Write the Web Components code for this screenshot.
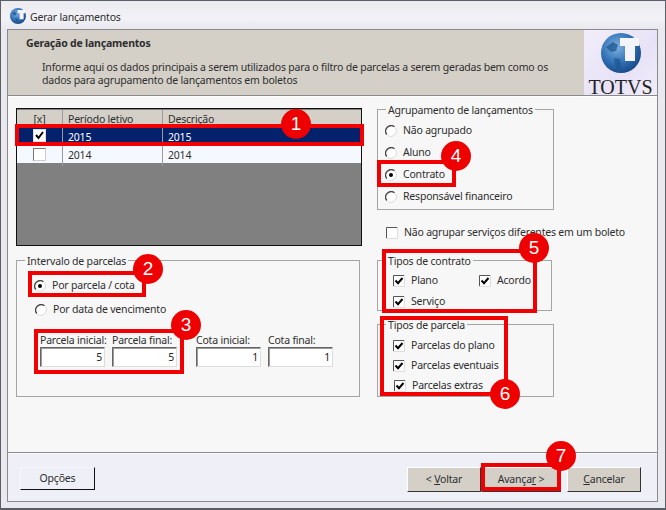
<!DOCTYPE html>
<html lang="pt"><head><meta charset="utf-8"><title>Gerar lançamentos</title>
<style>
html,body{margin:0;padding:0;width:666px;height:510px;overflow:hidden}
body{font:10.5px/13px "Noto Sans",sans-serif;letter-spacing:-.2px;color:#2e2e2e}
</style></head><body>
<gl-dialog>
  <gl-header slot="header"></gl-header>
  <div slot="left" style="display:flex;flex-direction:column;gap:14px">
    <gl-grid></gl-grid>
    <gl-group label="Intervalo de parcelas" style="width:344px;height:137px">
      <div style="display:flex;flex-direction:column;gap:11px;padding:11px 0 0 18px">
        <gl-opt type="radio" checked style="margin-left:-1px">Por parcela / cota</gl-opt>
        <gl-opt type="radio">Por data de vencimento</gl-opt>
      </div>
      <div style="display:flex;gap:0;padding:18px 0 0 23px">
        <gl-num label="Parcela inicial:" value="5" style="width:65px;margin-right:7px"></gl-num>
        <gl-num label="Parcela final:" value="5" style="width:65px;margin-right:19px"></gl-num>
        <gl-num label="Cota inicial:" value="1" style="width:65px;margin-right:7px"></gl-num>
        <gl-num label="Cota final:" value="1" style="width:65px"></gl-num>
      </div>
    </gl-group>
  </div>
  <div slot="right" style="display:flex;flex-direction:column">
    <gl-group label="Agrupamento de lançamentos" style="width:177px;height:101px;margin-top:1px">
      <div style="display:flex;flex-direction:column;gap:9px;padding:7px 0 0 7px">
        <gl-opt type="radio">Não agrupado</gl-opt>
        <gl-opt type="radio">Aluno</gl-opt>
        <gl-opt type="radio" checked>Contrato</gl-opt>
        <gl-opt type="radio">Responsável financeiro</gl-opt>
      </div>
    </gl-group>
    <gl-opt type="check" style="margin:16px 0 0 9px">Não agrupar serviços diferentes em um boleto</gl-opt>
    <gl-group label="Tipos de contrato" style="width:175px;height:51px;margin-top:21px">
      <div style="display:grid;grid-template-columns:86px auto;row-gap:8px;padding:6px 0 0 15px">
        <gl-opt type="check">Plano</gl-opt>
        <gl-opt type="check">Acordo</gl-opt>
        <gl-opt type="check">Serviço</gl-opt>
      </div>
    </gl-group>
    <gl-group label="Tipos de parcela" style="width:177px;height:73px;margin-top:13px">
      <div style="display:flex;flex-direction:column;gap:7px;padding:7px 0 0 15px">
        <gl-opt type="check">Parcelas do plano</gl-opt>
        <gl-opt type="check">Parcelas eventuais</gl-opt>
        <gl-opt type="check" style="margin-left:1px">Parcelas extras</gl-opt>
      </div>
    </gl-group>
  </div>
  <gl-btn slot="foot-left" flat style="width:75px;height:23px">Opções</gl-btn>
  <gl-btn slot="foot-right" style="width:74px"><span>&lt; <u>V</u>oltar</span></gl-btn>
  <gl-btn slot="foot-right" style="width:80px;margin-right:6px"><span>Avança<u>r</u> &gt;</span></gl-btn>
  <gl-btn slot="foot-right" style="width:74px"><span><u>C</u>ancelar</span></gl-btn>
  <gl-mark slot="marks" n="1" x="15" y="124" w="349" h="22" cx="296" cy="124"></gl-mark>
  <gl-mark slot="marks" n="2" x="28" y="271" w="118" h="26" cx="148" cy="269"></gl-mark>
  <gl-mark slot="marks" n="3" x="34" y="329" w="150" h="45" cx="186" cy="325"></gl-mark>
  <gl-mark slot="marks" n="4" x="377" y="160" w="79" h="27" cx="456" cy="156"></gl-mark>
  <gl-mark slot="marks" n="5" x="382" y="249" w="155" h="64" cx="534" cy="248"></gl-mark>
  <gl-mark slot="marks" n="6" x="380" y="316" w="128" h="80" cx="505" cy="394"></gl-mark>
  <gl-mark slot="marks" n="7" x="481" y="463" w="80" h="28" cx="561" cy="456"></gl-mark>
</gl-dialog>
<script>
function def(name, html, init){
  customElements.define(name, class extends HTMLElement{
    constructor(){super();this.attachShadow({mode:'open'}).innerHTML=html;}
    connectedCallback(){ if(init) init.call(this,this.shadowRoot); }
  });
}
const globe=(id,s)=>`<svg width="${s}" height="${s}" viewBox="0 0 40 40" aria-hidden="true"><defs><radialGradient id="${id}" cx=".4" cy=".35" r=".75"><stop offset="0" stop-color="#7fb2e0"/><stop offset=".55" stop-color="#2f6fb4"/><stop offset="1" stop-color="#123f7c"/></radialGradient></defs><circle cx="20" cy="20" r="20" fill="url(#${id})"/><path d="M5 14l7-5 5 3-2 6-5 1zM13 25l6 1 1 8-4 3-2-6z" fill="#1f568f" opacity=".75"/><path d="M19 5h19v8h-4v15H24V13h-5z" fill="#f4f4fa"/></svg>`;

def('gl-dialog',`<style>
:host{display:block;position:relative;width:666px;height:510px;box-sizing:border-box;border:1px solid #5c5f66;border-bottom-width:2px;background:#e9e9ef;overflow:hidden}
.title{display:flex;align-items:center;gap:4px;box-sizing:border-box;height:28px;padding:2px 0 0 9px;background:linear-gradient(#ebebf1,#f1f1f6 60%,#e9e9ef)}
.title span{margin-top:2px}
.panel{box-sizing:border-box;width:651px;height:473px;margin-left:6px;border:1px solid #8a8a8e;display:flex;flex-direction:column}
.body{flex:0 0 357px;box-sizing:border-box;background:#f7f7f7;border-bottom:1px solid #8a8a8e;display:grid;grid-template-columns:346px 177px;column-gap:15px;padding:12px 0 0 8px;box-shadow:inset 0 1px #fff}
.foot{flex:1;background:#eeeff7;border-top:1px solid #fff;display:flex;justify-content:space-between;padding:13px 16px 0 12px}
.r{display:flex;align-items:flex-start}
</style>
<div class="title">${globe('g1',16)}<span>Gerar lançamentos</span></div>
<div class="panel"><slot name="header"></slot>
<div class="body"><slot name="left"></slot><slot name="right"></slot></div>
<div class="foot"><slot name="foot-left"></slot><div class="r"><slot name="foot-right"></slot></div></div></div>
<slot name="marks"></slot>`);

def('gl-header',`<style>
:host{display:flex;justify-content:space-between;height:65px;background:#d4d0c8;border-bottom:1px solid #8a8a8e}
.t{padding:7px 0 0 18px}
b{display:block;line-height:13px;font-weight:700}
p{margin:11px 0 0 16px;line-height:13px;width:520px}
.logo{width:73px;background:linear-gradient(135deg,#f2eefb,#e7e2f6 60%,#f1edfb);display:flex;flex-direction:column;align-items:center;padding-top:3px;box-sizing:border-box}
.logo svg{margin-left:1px;flex:none}
.logo span{font:20px/15px "Liberation Serif",serif;letter-spacing:0;color:#222;white-space:nowrap;margin-top:7px}
</style>
<div class="t"><b>Geração de lançamentos</b><p>Informe aqui os dados principais a serem utilizados para o filtro de parcelas a serem geradas bem como os dados para agrupamento de lançamentos em boletos</p></div>
<div class="logo">${globe('g2',40)}<span>TOTVS</span></div>`);

def('gl-grid',`<style>
:host{display:block;box-sizing:border-box;width:346px;height:138px;border:1px solid #111;background:#808080;padding-top:1px}
.row{display:grid;grid-template-columns:45px 100px 1fr;box-sizing:border-box}
.row>*{box-sizing:border-box;padding-left:5px;border-left:1px solid #9a9a9a;white-space:nowrap}
.row>:first-child{border:0;padding:0;display:flex;justify-content:center}
.h{height:16px;background:#d4d0c8;line-height:19px}
.s{height:19px;background:#04216b;color:#fff;line-height:22px}
.n{height:18px;background:#f5f9ff;line-height:21px}
.box{width:13px;height:13px;box-sizing:border-box;background:#fff;border:1px solid #8c8c8c;margin-top:3px;display:block}
.s .box{border-color:#ddd}
svg{display:block}
</style>
<div class="row h"><div>[x]</div><div>Período letivo</div><div>Descrição</div></div>
<div class="row s"><div><span class="box"><svg width="11" height="11" viewBox="0 0 11 11"><path d="M2 5l2.500 3L9 2" fill="none" stroke="#000" stroke-width="2"/></svg></span></div><div>2015</div><div>2015</div></div>
<div class="row n"><div><span class="box" style="border-color:#777 #ccc #ccc #777"></span></div><div>2014</div><div>2014</div></div>`);

def('gl-group',`<style>
:host{display:block;box-sizing:border-box;border:1px solid #a4a4a4}
.l{display:table;margin:-6px 0 0 8px;padding:0 2px;background:#f7f7f7;line-height:13px;white-space:nowrap}
</style><div class="l"></div><slot></slot>`,function(s){s.querySelector('.l').textContent=this.getAttribute('label')});

def('gl-opt',`<style>
:host{display:flex;align-items:center;gap:6px;height:13px;line-height:13px;white-space:nowrap}
svg{flex:none;display:block}
</style><span id="i"></span><slot></slot>`,function(s){
  const t=this.getAttribute('type'),c=this.hasAttribute('checked');
  const k=s.getElementById('i');k.style.cssText='display:block;width:12px;height:12px;flex:none';
  k.innerHTML=t==='radio'
   ?`<svg width="12" height="12" viewBox="0 0 12 12"><circle cx="6" cy="6" r="5.500" fill="#fff"/><path d="M1.800 9.500A5.500 5.500 0 0 1 9.500 1.800" fill="none" stroke="#444" stroke-width="1.300"/><path d="M2.500 10.200A5.500 5.500 0 0 0 10.200 2.500" fill="none" stroke="#d8d8d8"/>${c?'<circle cx="6" cy="6" r="2" fill="#000"/>':''}</svg>`
   :`<svg width="12" height="12" viewBox="0 0 12 12"><rect width="12" height="12" fill="#fff"/><path d="M.5 12V.5H12" fill="none" stroke="#555"/><path d="M11.500 0v11.500H0" fill="none" stroke="#ddd"/>${this.textContent.startsWith('Não')?'':'<path d="M2.500 5.500l2.500 2.700L9.500 3" fill="none" stroke="#000" stroke-width="2"/>'}</svg>`;
});

def('gl-num',`<style>
:host{display:flex;flex-direction:column;gap:0}
label{line-height:13px;white-space:nowrap}
output{box-sizing:border-box;display:block;height:20px;background:#fff;border:1px solid;border-color:#666 #ddd #ddd #666;box-shadow:inset 1px 1px #999;text-align:right;line-height:18px;padding-right:2px;color:#222}
</style><label></label><output></output>`,function(s){s.querySelector('label').textContent=this.getAttribute('label');s.querySelector('output').textContent=this.getAttribute('value')});

def('gl-btn',`<style>
:host{display:flex;align-items:center;justify-content:center;box-sizing:border-box;height:25px;background:#d4d0c8;border:1px solid;border-color:#fff #333 #333 #fff;white-space:nowrap}
:host([flat]){background:#eeeff7;border-color:#f6f6fb #111 #111 #f6f6fb}
</style><slot></slot>`);

def('gl-mark',`<style>
:host{display:contents}
.r{position:absolute;box-sizing:border-box;border:4px solid #f00000}
.c{position:absolute;box-sizing:border-box;width:30px;height:30px;margin:-15px 0 0 -15px;border-radius:50%;background:#ef0000;color:#fff;font:19px/30px "Liberation Sans",sans-serif;letter-spacing:0;text-align:center}
</style><div class="r"></div><div class="c"></div>`,function(s){
  const a=n=>this.getAttribute(n)-0,r=s.querySelector('.r'),c=s.querySelector('.c');
  r.style.cssText=`left:${a('x')-1}px;top:${a('y')-1}px;width:${a('w')}px;height:${a('h')}px`;
  c.style.cssText=`left:${a('cx')-1}px;top:${a('cy')-1}px`;
  c.textContent=this.getAttribute('n');
});
</script>
</body></html>
